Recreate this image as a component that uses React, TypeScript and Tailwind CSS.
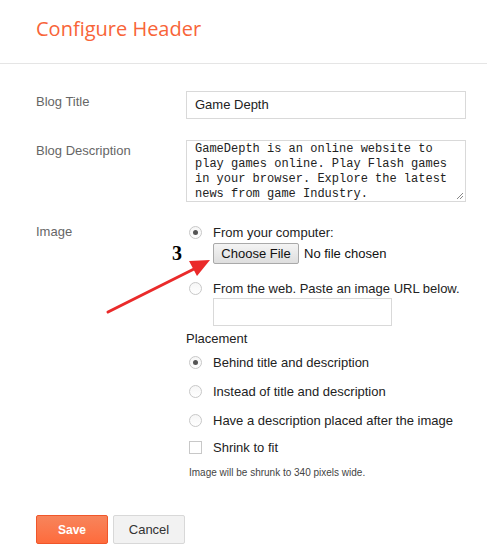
import React from 'react';

function Radio({ checked = false }: { checked?: boolean }) {
  return (
    <span className="flex h-[13px] w-[13px] shrink-0 items-center justify-center rounded-full border border-[#c8c8c8] bg-gradient-to-b from-[#f6f6f6] to-white">
      {checked && <span className="h-[5px] w-[5px] rounded-full bg-[#555]" />}
    </span>
  );
}

function Option({ checked, label }: { checked?: boolean; label: string }) {
  return (
    <div className="flex h-[29px] items-center">
      <div className="flex w-[27px] pl-[3px]">
        <Radio checked={checked} />
      </div>
      <span className="text-[13px] text-[#222]">{label}</span>
    </div>
  );
}

export default function App() {
  return (
    <div className="relative h-[560px] w-[487px] overflow-hidden bg-white font-['Liberation_Sans',Arial,sans-serif]">
      {/* Header */}
      <div className="h-[64px] border-b border-[#e5e5e5] pl-[36px] pt-[14px]">
        <h1 className="font-['Open_Sans',sans-serif] text-[20px] leading-[30px] text-[#f86438]">
          Configure Header
        </h1>
      </div>

      <div className="pl-[36px]">
        {/* Blog Title */}
        <div className="mt-[27px] flex">
          <label className="w-[150px] shrink-0 pt-[3px] text-[13px] leading-[15px] text-[#666]">Blog Title</label>
          <div className="flex h-[28px] w-[280px] shrink-0 items-center border border-[#d9d9d9] px-[8px] text-[13px] text-[#222]">
            Game Depth
          </div>
        </div>

        {/* Blog Description */}
        <div className="mt-[21px] flex">
          <label className="w-[150px] shrink-0 pt-[3px] text-[13px] leading-[15px] text-[#666]">Blog Description</label>
          <div className="relative h-[62px] w-[280px] shrink-0 border border-[#d9d9d9] pl-[8px] pt-[1px] font-['Liberation_Mono',monospace] text-[12px] leading-[15px] text-[#222]">
            GameDepth is an online website to
            <br />
            play games online. Play Flash games
            <br />
            in your browser. Explore the latest
            <br />
            news from game Industry.
            <svg className="absolute bottom-[1px] right-[1px]" width="9" height="9" viewBox="0 0 9 9">
              <path d="M8 2 L2 8 M8 5 L5 8" stroke="#888" strokeWidth="1" />
            </svg>
          </div>
        </div>

        {/* Image */}
        <div className="mt-[22px] flex">
          <label className="w-[150px] shrink-0 text-[13px] leading-[15px] text-[#666]">Image</label>
          <div className="flex shrink-0 flex-col">
            <div className="flex h-[17px] items-center">
              <div className="flex w-[27px] pl-[3px]">
                <Radio checked />
              </div>
              <span className="text-[13px] text-[#222]">From your computer:</span>
            </div>
            <div className="mt-[2px] flex items-center pl-[27px]">
              <span className="flex h-[21px] w-[86px] items-center justify-center rounded-[2px] border border-[#a9a9a9] bg-gradient-to-b from-[#f4f4f4] to-[#dedede] text-[13px] text-[#111]">
                Choose File
              </span>
              <span className="ml-[5px] text-[13px] text-[#111]">No file chosen</span>
            </div>
            <div className="mt-[16px] flex h-[17px] items-center">
              <div className="flex w-[27px] pl-[3px]">
                <Radio />
              </div>
              <span className="whitespace-nowrap text-[13px] text-[#222]">From the web. Paste an image URL below.</span>
            </div>
            <div className="ml-[27px] mt-[1px] h-[28px] w-[179px] border border-[#d9d9d9]" />
            <div className="mt-[5px] text-[13px] leading-[15px] text-[#222]">Placement</div>
            <div className="mt-[2px] flex flex-col">
              <Option checked label="Behind title and description" />
              <Option label="Instead of title and description" />
              <Option label="Have a description placed after the image" />
              <div className="flex h-[25px] items-center">
                <div className="flex w-[27px] pl-[3px]">
                  <span className="h-[13px] w-[13px] border border-[#c8c8c8] bg-white" />
                </div>
                <span className="text-[13px] text-[#222]">Shrink to fit</span>
              </div>
            </div>
            <div className="mt-[5px] pl-[3px] text-[10px] text-[#444]">Image will be shrunk to 340 pixels wide.</div>
          </div>
        </div>

        {/* Buttons */}
        <div className="mt-[35px] flex gap-[5px]">
          <button className="h-[29px] w-[72px] rounded-[2px] border border-[#f0562a] bg-gradient-to-b from-[#f7845b] to-[#fe6b3c] text-[12px] font-bold text-white">
            Save
          </button>
          <button className="h-[29px] w-[72px] rounded-[2px] border border-[#d8d8d8] bg-[#f2f2f2] text-[13px] text-[#333]">
            Cancel
          </button>
        </div>
      </div>

      {/* Annotation overlay */}
      <span className="absolute left-[172px] top-[238px] font-['Liberation_Serif',serif] text-[20px] font-bold text-black">3</span>
      <svg className="absolute left-0 top-0" width="487" height="560" viewBox="0 0 487 560">
        <line x1="108" y1="312" x2="196" y2="268" stroke="#ea2a2a" strokeWidth="3" strokeLinecap="round" />
        <polygon points="210,260 189,261 197,276" fill="#ea2a2a" />
      </svg>
    </div>
  );
}
